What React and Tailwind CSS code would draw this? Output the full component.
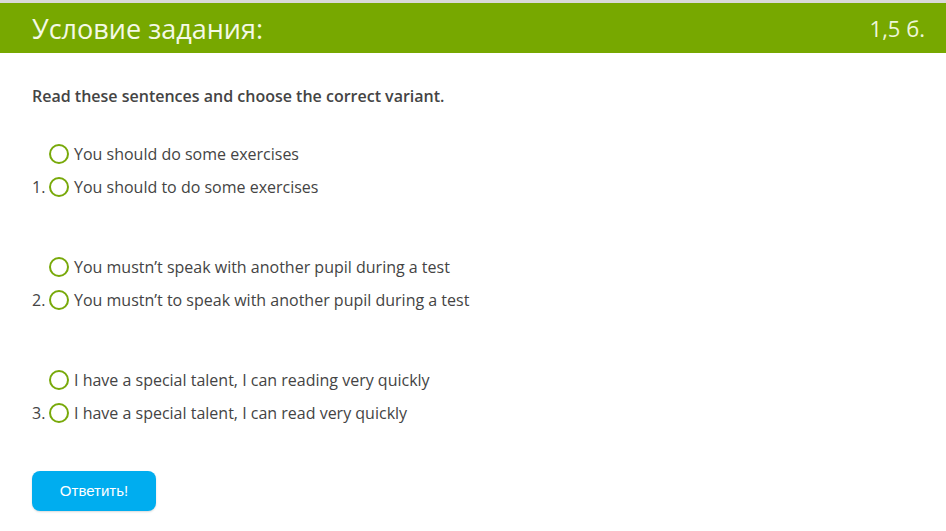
const groups = [
  ["You should do some exercises", "You should to do some exercises"],
  [
    "You mustn’t speak with another pupil during a test",
    "You mustn’t to speak with another pupil during a test",
  ],
  [
    "I have a special talent, I can reading very quickly",
    "I have a special talent, I can read very quickly",
  ],
];

const Radio = () => (
  <span className="inline-block w-[20px] h-[20px] rounded-full border-2 border-[#78a90a] bg-white shrink-0" />
);

export default function App() {
  return (
    <div className="w-[946px] h-[531px] bg-white overflow-hidden font-['Open_Sans',sans-serif] text-[#444]">
      <div className="h-[3px] bg-[#d9d9d9]" />
      <div className="h-[50px] bg-[#77a800] flex items-center justify-between pl-[32px] pr-[21px]">
        <h1 className="text-[27px] font-medium text-[#f4f9e6] leading-none">Условие задания:</h1>
        <span className="text-[22px] text-[#eef6d8] leading-none">1,5 б.</span>
      </div>
      <div className="px-[32px] pt-[32px]">
        <p className="text-[16px] font-semibold text-[#444] leading-[22px]">
          Read these sentences and choose the correct variant.
        </p>
        <div className="mt-[34px] flex flex-col gap-[54px]">
          {groups.map((g, i) => (
            <div key={i} className="flex items-end">
              <span className="w-[17px] h-[26px] flex items-center text-[16px]">{i + 1}.</span>
              <div className="flex flex-col gap-[7px]">
                {g.map((t) => (
                  <label key={t} className="flex items-center gap-[5px] h-[26px] text-[16px]">
                    <Radio />
                    <span>{t}</span>
                  </label>
                ))}
              </div>
            </div>
          ))}
        </div>
        <button className="mt-[45px] w-[124px] h-[40px] rounded-[8px] bg-[#00adef] text-white text-[15px] font-['Liberation_Sans',sans-serif] shadow-[0_1px_2px_rgba(0,0,0,0.15)]">
          Ответить!
        </button>
      </div>
    </div>
  );
}
